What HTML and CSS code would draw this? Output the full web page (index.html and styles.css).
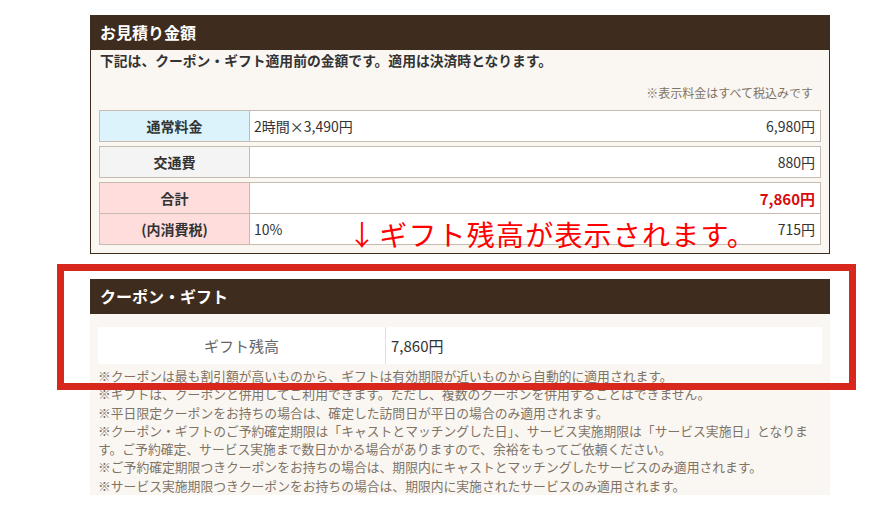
FILE: index.html
```html
<!DOCTYPE html>
<html lang="ja">
<head>
<meta charset="utf-8">
<link rel="stylesheet" href="styles.css">
</head>
<body>
<div class="page">
  <section class="estimate">
    <h2 class="sec-head">お見積り金額</h2>
    <div class="estimate-body">
      <p class="lead">下記は、クーポン・ギフト適用前の金額です。適用は決済時となります。</p>
      <p class="tax-note">※表示料金はすべて税込みです</p>
      <div class="price-group">
        <div class="price-row">
          <div class="label label-blue">通常料金</div>
          <div class="value"><span>2時間×3,490円</span><span>6,980円</span></div>
        </div>
      </div>
      <div class="price-group">
        <div class="price-row">
          <div class="label label-gray">交通費</div>
          <div class="value"><span></span><span>880円</span></div>
        </div>
      </div>
      <div class="price-group">
        <div class="price-row">
          <div class="label label-pink">合計</div>
          <div class="value"><span></span><span class="total">7,860円</span></div>
        </div>
        <div class="price-row">
          <div class="label label-pink">(内消費税)</div>
          <div class="value"><span>10%</span><span>715円</span></div>
        </div>
      </div>
    </div>
    <div class="annotation"><span class="arrow">↓</span>ギフト残高が表示されます。</div>
  </section>

  <section class="coupon">
    <h2 class="sec-head">クーポン・ギフト</h2>
    <div class="coupon-body">
      <div class="gift-row">
        <div class="gift-label">ギフト残高</div>
        <div class="gift-value">7,860円</div>
      </div>
      <div class="notes">
        <p>※クーポンは最も割引額が高いものから、ギフトは有効期限が近いものから自動的に適用されます。</p>
        <p>※ギフトは、クーポンと併用してご利用できます。ただし、複数のクーポンを併用することはできません。</p>
        <p>※平日限定クーポンをお持ちの場合は、確定した訪問日が平日の場合のみ適用されます。</p>
        <p>※クーポン・ギフトのご予約確定期限は「キャストとマッチングした日」、サービス実施期限は「サービス実施日」となります。ご予約確定、サービス実施まで数日かかる場合がありますので、余裕をもってご依頼ください。</p>
        <p>※ご予約確定期限つきクーポンをお持ちの場合は、期限内にキャストとマッチングしたサービスのみ適用されます。</p>
        <p>※サービス実施期限つきクーポンをお持ちの場合は、期限内に実施されたサービスのみ適用されます。</p>
      </div>
    </div>
    <div class="highlight-box"></div>
  </section>
</div>
</body>
</html>
```
FILE: styles.css
```css
* { box-sizing: border-box; }
html, body { margin: 0; padding: 0; background: #fff; }
body {
  font-family: "Noto Sans CJK JP", "Noto Sans", "Liberation Sans", sans-serif;
  color: #333;
}
p { margin: 0; }
.page {
  width: 881px;
  height: 526px;
  padding: 15px 0 0 90px;
  overflow: hidden;
}
.sec-head {
  margin: 0;
  height: 35px;
  line-height: 35px;
  padding-left: 10px;
  background: #3e2c1e;
  color: #fff;
  font-size: 16px;
  font-weight: 700;
}
.estimate {
  position: relative;
  width: 740px;
}
.estimate-body {
  background: #faf7f2;
  border: 1px solid #3e2c1e;
  border-top: none;
  padding: 0 8px 8px 8px;
}
.lead {
  font-size: 13.8px;
  font-weight: 700;
  line-height: 20px;
  padding-left: 1px;
  color: #333;
}
.tax-note {
  margin-top: 14px;
  margin-bottom: 8px;
  font-size: 12px;
  line-height: 18px;
  text-align: right;
  padding-right: 8px;
  color: #7f7366;
}
.price-group {
  border: 1px solid #c6bbae;
  background: #fff;
  margin-bottom: 4px;
}
.price-group:last-child { margin-bottom: 0; }
.price-row {
  display: grid;
  grid-template-columns: 150px 1fr;
  height: 30px;
}
.price-row + .price-row { border-top: 1px solid #c6bbae; height: 31px; }
.label {
  border-right: 1px solid #c6bbae;
  display: flex;
  align-items: center;
  justify-content: center;
  font-size: 14px;
  font-weight: 700;
  color: #333;
}
.label-blue { background: #dcf3fc; }
.label-gray { background: #f4f4f4; }
.label-pink { background: #ffdddd; }
.value {
  display: flex;
  align-items: center;
  justify-content: space-between;
  padding: 0 5px 0 4px;
  font-size: 14px;
  color: #333;
}
.total {
  color: #d80c0c;
  font-weight: 700;
  font-size: 15px;
}
.annotation {
  position: absolute;
  left: 258px;
  top: 199px;
  font-size: 28px;
  line-height: 40px;
  letter-spacing: 1.2px;
  color: #ff0000;
  white-space: nowrap;
}
.arrow {
  display: inline-block;
  margin-right: 2px;
}
.coupon {
  position: relative;
  width: 740px;
  margin-top: 25px;
}
.coupon-body {
  background: #faf7f2;
  padding: 13px 8px 0 8px;
}
.gift-row {
  display: grid;
  grid-template-columns: 288px 1fr;
  height: 37px;
  background: #fff;
}
.gift-label {
  border-right: 1px solid #eadfd6;
  display: flex;
  align-items: center;
  justify-content: center;
  font-size: 15px;
  color: #666;
}
.gift-value {
  display: flex;
  align-items: center;
  padding-left: 5px;
  font-size: 15px;
  color: #333;
}
.notes {
  padding: 3px 0 0 0;
  font-size: 12.8px;
  line-height: 18.3px;
  color: #7f7366;
}
.highlight-box {
  position: absolute;
  left: -33px;
  top: -15px;
  width: 799px;
  height: 126px;
  border: 7px solid #d8281e;
  pointer-events: none;
}
```
